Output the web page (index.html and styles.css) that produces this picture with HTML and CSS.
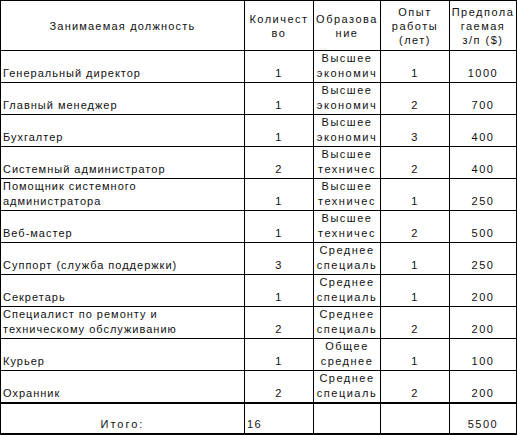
FILE: index.html
```html
<!DOCTYPE html>
<html lang="ru">
<head>
<meta charset="utf-8">
<link rel="stylesheet" href="styles.css">
</head>
<body>
<table class="staff">
  <colgroup>
    <col class="c-pos"><col class="c-qty"><col class="c-edu"><col class="c-exp"><col class="c-sal">
  </colgroup>
  <thead>
    <tr>
      <th class="h-pos">Занимаемая должность</th>
      <th>Количест<br>во</th>
      <th>Образова<br>ние</th>
      <th>Опыт<br>работы<br>(лет)</th>
      <th>Предпола<br>гаемая<br>з/п ($)</th>
    </tr>
  </thead>
  <tbody>
    <tr><td class="pos">Генеральный директор</td><td class="num">1</td><td class="edu">Высшее<br>экономич</td><td class="num">1</td><td class="num">1000</td></tr>
    <tr><td class="pos">Главный менеджер</td><td class="num">1</td><td class="edu">Высшее<br>экономич</td><td class="num">2</td><td class="num">700</td></tr>
    <tr><td class="pos">Бухгалтер</td><td class="num">1</td><td class="edu">Высшее<br>экономич</td><td class="num">3</td><td class="num">400</td></tr>
    <tr><td class="pos">Системный администратор</td><td class="num">2</td><td class="edu">Высшее<br>техничес</td><td class="num">2</td><td class="num">400</td></tr>
    <tr><td class="pos">Помощник системного<br>администратора</td><td class="num">1</td><td class="edu">Высшее<br>техничес</td><td class="num">1</td><td class="num">250</td></tr>
    <tr><td class="pos">Веб-мастер</td><td class="num">1</td><td class="edu">Высшее<br>техничес</td><td class="num">2</td><td class="num">500</td></tr>
    <tr><td class="pos">Суппорт (служба поддержки)</td><td class="num">3</td><td class="edu">Среднее<br>специаль</td><td class="num">1</td><td class="num">250</td></tr>
    <tr><td class="pos">Секретарь</td><td class="num">1</td><td class="edu">Среднее<br>специаль</td><td class="num">1</td><td class="num">200</td></tr>
    <tr><td class="pos">Специалист по ремонту и<br>техническому обслуживанию</td><td class="num">2</td><td class="edu">Среднее<br>специаль</td><td class="num">2</td><td class="num">200</td></tr>
    <tr><td class="pos">Курьер</td><td class="num">1</td><td class="edu">Общее<br>среднее</td><td class="num">1</td><td class="num">100</td></tr>
    <tr><td class="pos">Охранник</td><td class="num">2</td><td class="edu">Среднее<br>специаль</td><td class="num">2</td><td class="num">200</td></tr>
  </tbody>
  <tfoot>
    <tr><td class="total-label">Итого:</td><td class="total-qty">16</td><td></td><td></td><td class="num">5500</td></tr>
  </tfoot>
</table>
</body>
</html>
```

FILE: styles.css
```css
html, body {
  margin: 0;
  padding: 0;
  background: #fff;
}

.staff {
  border-collapse: collapse;
  table-layout: fixed;
  width: 516px;
  font-family: "Liberation Sans", Arial, sans-serif;
  font-size: 11px;
  letter-spacing: 1px;
  color: #111;
}

.c-pos { width: 244px; }
.c-qty { width: 69px; }
.c-edu { width: 67px; }
.c-exp { width: 69px; }
.c-sal { width: 67px; }

.staff th,
.staff td {
  border: 1px solid #000;
  padding: 0 2px;
  line-height: 14px;
  overflow: hidden;
  white-space: nowrap;
}

.staff th {
  height: 48px;
  font-weight: normal;
  text-align: center;
  vertical-align: middle;
  padding: 1px 0 0;
  letter-spacing: 1.5px;
}

.staff th.h-pos {
  letter-spacing: 1.2px;
}

.staff tbody td {
  height: 30px;
  vertical-align: bottom;
  padding-bottom: 1px;
  line-height: 15px;
}

.staff tbody tr:last-child td {
  border-bottom: 2px solid #000;
}

.pos { text-align: left; }

.num,
.edu {
  text-align: center;
  letter-spacing: 1.5px;
}

.staff td.edu {
  padding: 0 0 1px;
}

.staff tfoot td {
  height: 28px;
  vertical-align: bottom;
  padding-bottom: 1px;
  line-height: 15px;
  border-bottom: 2px solid #000;
}

.total-label {
  text-align: center;
  letter-spacing: 2px;
}

.total-qty {
  text-align: left;
  letter-spacing: 1.5px;
}
```
